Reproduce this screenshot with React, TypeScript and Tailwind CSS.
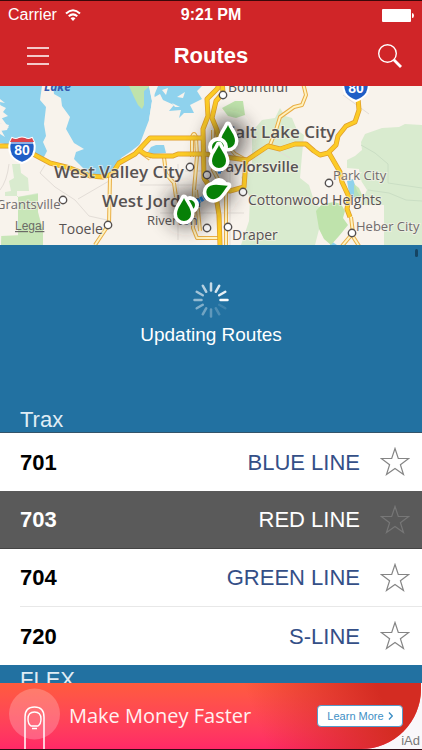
import React from "react";

type Route = { id: string; name: string; active?: boolean };

const traxRoutes: Route[] = [
  { id: "701", name: "BLUE LINE" },
  { id: "703", name: "RED LINE", active: true },
  { id: "704", name: "GREEN LINE" },
  { id: "720", name: "S-LINE" },
];

const highways = [
  "M-5 146H10L22 149L35 155L50 163L70 168L90 176L103 177L112 174L119 163L135 154L150 138H204",
  "M138 149L145 154L153 156H173L178 154H205L225 157L247 160L268 146L280 149L295 144H306L314 151L320 155L328 153L336 145L338 136L346 126L355 122L359 110L358 98",
  "M329 153L340 172L342 182L349 197L347 209L350 217",
  "M218 80V88L207 99L208 116L203 129L204 178L209 186L216 196L219 215L220 245",
  "M222 80L223 93L216 101L212 118L217 130L219 142",
  "M204 178L211 188L230 191L244 187L246 160",
];

const localRoads = [
  "M110 177L109 224L95 245",
  "M139 151L150 159",
  "M164 157L166 174L174 183L176 197L182 204",
  "M192 157V137Q194 131 196 137L197 156L194 190L193 228L197 238H220",
  "M196 190L200 231",
  "M213 130V170L226 194V245",
  "M246 160L235 154L228 146",
  "M270 145L276 130L280 117L294 107L302 105L306 95L303 83",
  "M351 217L353 233L342 246",
  "M352 235L359 246",
];

const places = [
  { text: "Bountiful", x: 228, y: 92, size: 14, dot: [223, 95] },
  { text: "Salt Lake City", x: 226, y: 138, size: 17, bold: true },
  { text: "West Valley City", x: 54, y: 178, size: 17, bold: true, dot: [190, 167] },
  { text: "Taylorsville", x: 217, y: 172, size: 15, bold: true, dot: [207, 175] },
  { text: "West Jordan", x: 102, y: 207, size: 17, bold: true },
  { text: "Cottonwood Heights", x: 248, y: 205, size: 14, dot: [243, 192] },
  { text: "Park City", x: 333, y: 180, size: 13, light: true, dot: [329, 183] },
  { text: "Grantsville", x: -4, y: 209, size: 13, light: true, dot: [63, 200] },
  { text: "Riverton", x: 147, y: 225, size: 13, dot: [207, 228] },
  { text: "Tooele", x: 59, y: 234, size: 14, dot: [108, 225] },
  { text: "Draper", x: 232, y: 240, size: 14, dot: [228, 227] },
  { text: "Heber City", x: 356, y: 231, size: 13, light: true, dot: [352, 233] },
];

function Shield({ x, y }: { x: number; y: number }) {
  return (
    <g transform={`translate(${x} ${y})`}>
      <path d="M-10-11Q-6-9-3-11Q0-12 3-11Q6-9 10-11Q15-3 11 6Q8 11 0 14Q-8 11-11 6Q-15-3-10-11Z" fill="#1f5ec6" stroke="#fff" strokeWidth="2" />
      <path d="M-10-11Q-6-9-3-11Q0-12 3-11Q6-9 10-11L12-7H-12Z" fill="#d9434a" />
      <path d="M-12-6H12" stroke="#fff" strokeWidth="1" />
      <text y="6" textAnchor="middle" fontSize="14" fontWeight="700" fill="#fff" className="font-['Liberation_Sans',sans-serif]">80</text>
    </g>
  );
}

function Drop({ x, y, angle = 0 }: { x: number; y: number; angle?: number }) {
  return (
    <path
      transform={`translate(${x} ${y}) rotate(${angle})`}
      d="M0-13C2-8 7-3 7 3A7 7 0 0 1-7 3C-7-3-2-8 0-13Z"
      fill="#078007"
      stroke="#fff"
      strokeWidth="7"
      strokeLinejoin="round"
      paintOrder="stroke"
    />
  );
}

function RouteMap() {
  return (
    <svg viewBox="0 86 422 159" preserveAspectRatio="xMidYMid slice" className="block h-[159px] w-full shrink-0 font-['Open_Sans','Noto_Sans',sans-serif]" role="img" aria-label="Map of Salt Lake City routes">
      <defs>
        <filter id="haze" x="-100%" y="-100%" width="300%" height="300%"><feGaussianBlur stdDeviation="10" /></filter>
      </defs>
      <rect x="-400" y="86" width="1222" height="159" fill="#f8f3ec" />

      <g fill="#8fd2ed">
        <path d="M0 86H42L40 100L46 107L44 124L46 136L43 142L47 151L43 159L34 153L25 147L10 145L0 143V134L5 137L0 128V123L9 128L1 117L0 102L5 103L0 99Z" />
        <path d="M53 86H149L152 101L149 120L150 135L139 145L130 152L121 158L115 172L104 176L88 173L79 164L74 159L76 152L84 149L74 143L66 129L70 117L62 106L61 98L54 94Z" />
        <path d="M158 86H202L197 91L202 99L190 105L194 113L184 113L179 118L181 110L169 111L174 105L163 100L160 94L153 98Z" />
        <path d="M151 147L156 145H164L166 153L153 154L148 152Z" />
        <path d="M347 181L353 179L357 191L360 196L350 199Z" />
        <path d="M331 241L337 245H330Z" />
      </g>
      <g fill="#f8f3ec">
        <path d="M0 105L6 108L3 112L8 116L0 119ZM0 123L9 125L7 130L0 131Z" />
        <path d="M162 90L168 88L166 95ZM177 97L185 92L183 98ZM172 103L180 107L175 107Z" />
      </g>
      <g fill="#d9ebcf">
        <path d="M252 132L262 120L275 118L280 108L285 116L292 118L297 130L304 135L302 155L300 178L309 185L315 204L324 210L315 245H241L249 221L250 198L241 177L252 171Z" />
        <path d="M422 125L405 124L399 127L382 128L365 134L361 142L362 150L355 156L347 160L347 168L359 169L360 179L367 190L360 205H384V245H422Z" />
        <path d="M12 164L20 164L21 173L28 178L29 191H17V197L38 193V213L40 221L43 229L43 245H1L2 236H18V196H5V192L11 191L9 181L14 178Z" />
      </g>
      <g fill="#bfe3ac">
        <path d="M129 86H150L144 91V105L142 109L138 105L134 97Z" />
        <path d="M222 108L235 101L243 101L245 115L236 118L228 116Z" />
        <path d="M18 197L38 194V212L43 230V245H1V236L18 235Z" opacity=".65" />
        <path d="M316 211L322 204L334 202L341 204L345 211L343 218L348 225L339 236L331 245L324 239L319 229Z" />
        <path d="M354 184L359 188L363 197H354Z" opacity=".8" />
      </g>
      <path d="M149 86H153L155 99L151 120V137L139 146L149 120L152 101Z" fill="#f8f3ec" />
      <g fill="none" stroke="#e3ddd7">
        <path d="M9 164Q7 181 0 190M45 165L40 173L55 187L75 200L89 216L107 220M78 199L109 181M140 185H200M178 164V240M230 155V245M185 171H248M160 213H244M273 148L290 158M343 95L369 114" />
        <path d="M361 145L375 153L388 164V183L422 188M368 190L389 193L406 200L422 201" stroke="#cadec4" />
      </g>

      <g fill="none" strokeLinejoin="round">
        {localRoads.map((d) => <path key={d} d={d} stroke="#e9ae46" strokeWidth="4" />)}
        {localRoads.map((d) => <path key={d} d={d} stroke="#fff2bf" strokeWidth="2" />)}
        {highways.map((d) => <path key={d} d={d} stroke="#df9e2d" strokeWidth="5" />)}
        {highways.map((d) => <path key={d} d={d} stroke="#fccb26" strokeWidth="3.5" />)}
      </g>

      <Shield x={22} y={149} />
      <Shield x={356} y={87} />

      <text x="44" y="91" fontSize="12" fontStyle="italic" fontWeight="700" fill="#365baf">Lake</text>
      {places.map((p) => (
        <g key={p.text}>
          {p.dot && <circle cx={p.dot[0]} cy={p.dot[1]} r="3.7" fill="#fff" stroke="#55504f" strokeWidth="1.4" />}
          <text x={p.x} y={p.y} fontSize={p.size} fontWeight={p.bold ? 600 : 500} fill={p.light ? "#716c6d" : "#575252"} stroke="#f8f3ec" strokeWidth="2" strokeOpacity=".6" paintOrder="stroke">{p.text}</text>
        </g>
      ))}
      <text x="15" y="230" fontSize="12" fill="#6b6b67" textDecoration="underline" className="font-['Liberation_Sans',sans-serif]">Legal</text>

      <g filter="url(#haze)" fill="#272320" opacity=".72">
        <circle cx="228" cy="137" r="18" />
        <circle cx="219" cy="156" r="16" />
        <circle cx="216" cy="190" r="16" />
        <circle cx="186" cy="208" r="18" />
      </g>
      <path d="M218 171H222M197 202L205 197" stroke="#175b9d" strokeWidth="5" strokeDasharray="3 1" />
      <Drop x={228} y={138} />
      <circle cx="218" cy="147" r="8" fill="#078007" stroke="#fff" strokeWidth="4" />
      <Drop x={219} y={158} />
      <circle cx="219" cy="187" r="7" fill="#078007" stroke="#fff" strokeWidth="4" />
      <Drop x={216} y={191} angle={66} />
      <circle cx="190" cy="205" r="7" fill="#078007" stroke="#fff" strokeWidth="4" />
      <Drop x={184} y={211} />
    </svg>
  );
}

function Spinner() {
  return (
    <svg viewBox="0 0 38 38" className="size-[38px]" aria-hidden="true">
      {Array.from({ length: 12 }, (_, i) => (
        <path key={i} d="M28.5 19H35.5" stroke="#fff" strokeWidth="2.5" strokeLinecap="round" transform={`rotate(${-i * 30} 19 19)`} opacity={0.98 - i * 0.078} />
      ))}
    </svg>
  );
}

function RouteRow({ route, divided }: { route: Route; divided: boolean }) {
  return (
    <li className={route.active ? "border-b border-[#444] bg-[#5a5a5a] text-white" : "bg-white text-black"}>
      <div className={`ml-5 flex items-center pr-3 ${route.active ? "h-[57px]" : "h-[58px]"} ${divided ? "border-b border-[#e8e8e8]" : ""}`}>
        <span className="text-[22px] font-bold">{route.id}</span>
        <span className={`ml-auto text-[22px] ${route.active ? "text-white" : "text-[#344f87]"}`}>{route.name}</span>
        <button type="button" aria-label={`Favorite route ${route.id}`} className="ml-5 shrink-0">
          <svg viewBox="0 0 30 30" className={`block size-[30px] ${route.active ? "text-[#777]" : "text-[#858585]"}`} fill="none" stroke="currentColor" strokeWidth="1.2">
            <path d="M15 1.5L18.3 11.5H28.7L20.4 17.7L23.5 27.5L15 21.5L6.5 27.5L9.6 17.7L1.3 11.5H11.7Z" />
          </svg>
        </button>
      </div>
    </li>
  );
}

export default function App() {
  return (
    <div className="flex h-screen flex-col overflow-hidden bg-[#2271a1] font-['Liberation_Sans',Arial,sans-serif]">
      <header className="shrink-0 border-t border-[#3b0809] bg-[#d02528] text-white">
        <div className="grid h-7 grid-cols-3 items-center px-2 text-base">
          <div className="flex items-center gap-2">
            <span>Carrier</span>
            <svg viewBox="0 0 16 12" className="h-3 w-4" fill="none" stroke="white" strokeWidth="2" aria-label="Wi-Fi">
              <path d="M1 4.5Q8-2 15 4.5M3.7 7.3Q8 3.5 12.3 7.3" />
              <path d="M5.5 9.3Q8 7.4 10.5 9.3L8 12Z" fill="white" stroke="none" />
            </svg>
          </div>
          <span className="text-center font-bold">9:21 PM</span>
          <svg viewBox="0 0 32 13" className="h-[13px] w-8 justify-self-end" fill="white" aria-label="Battery full">
            <rect width="29" height="13" rx="1" /><path d="M30 4Q32 4 32 6.5Q32 9 30 9Z" />
          </svg>
        </div>
        <div className="flex h-[57px] items-center justify-between px-5 pb-1">
          <button type="button" aria-label="Menu" className="flex size-9 items-center justify-center">
            <svg viewBox="0 0 22 18" className="h-[18px] w-[22px]" stroke="white" strokeWidth="1.3"><path d="M0 1H22M0 9H22M0 17H22" /></svg>
          </button>
          <h1 className="text-[22px] font-bold">Routes</h1>
          <button type="button" aria-label="Search" className="flex size-9 items-center justify-end">
            <svg viewBox="0 0 24 24" className="size-6" fill="none" stroke="white"><circle cx="9.5" cy="9.5" r="8.8" strokeWidth="1.4" /><path d="M15.8 15.8L23 23" strokeWidth="2.8" /></svg>
          </button>
        </div>
      </header>

      <RouteMap />

      <main className="relative min-h-0 flex-1 overflow-hidden">
        <div className="absolute top-1 right-1 h-2 w-[3px] rounded-full bg-[#154463]" />
        <div role="status" className="flex h-40 flex-col items-center gap-1 pt-9 text-[19px] leading-6 text-white">
          <Spinner />
          <span>Updating Routes</span>
        </div>
        <section>
          <h2 className="h-7 border-b border-[#34546a] pl-5 text-[22px] leading-[29px] text-[#e0edf5]">Trax</h2>
          <ul>
            {traxRoutes.map((route) => <RouteRow key={route.id} route={route} divided={route.id === "704"} />)}
          </ul>
        </section>
        <section>
          <h2 className="h-7 pl-5 text-[22px] leading-[29px] text-[#e0edf5]">FLEX</h2>
        </section>
      </main>

      <footer className="relative h-[67px] shrink-0 border-b border-[#300b14] bg-[#f9f7fa]">
        <div className="relative mr-px flex h-full items-center overflow-hidden rounded-br-[60px] bg-linear-to-b from-[#ff5b3d] to-[#ff2867]">
          <div className="absolute inset-0 bg-linear-[70deg] from-transparent from-60% to-[#d42c22] to-90%" />
          <svg viewBox="0 0 54 66" className="relative ml-2 h-full w-[54px] shrink-0" fill="none" stroke="white" aria-hidden="true">
            <circle cx="26.5" cy="31" r="25.5" fill="white" fillOpacity=".22" stroke="none" />
            <path d="M17 66V34Q17 24 26.5 24Q36 24 36 34V66" strokeWidth="1.5" />
            <path d="M23 43Q20 41 20 36Q20 29 26.5 29Q33 29 33 36Q33 41 30 43ZM24 45.5H29" strokeWidth="1.4" />
          </svg>
          <span className="relative ml-[7px] text-[20px] whitespace-nowrap text-[#fff1f0] font-['Open_Sans','Noto_Sans',sans-serif]">Make Money Faster</span>
          <button type="button" className="relative mr-[18px] ml-auto flex h-[22px] w-[86px] shrink-0 items-center justify-center gap-1 rounded border border-[#569bca] bg-white text-[11px] text-[#3e8fc5]">
            Learn More
            <svg viewBox="0 0 5 8" className="h-2 w-[5px]" fill="none" stroke="currentColor" strokeWidth="1.4"><path d="M1 .5L4.3 4L1 7.5" /></svg>
          </button>
        </div>
        <span className="absolute right-[2px] bottom-0 text-[13px] leading-4 text-[#777]">iAd</span>
      </footer>
    </div>
  );
}
